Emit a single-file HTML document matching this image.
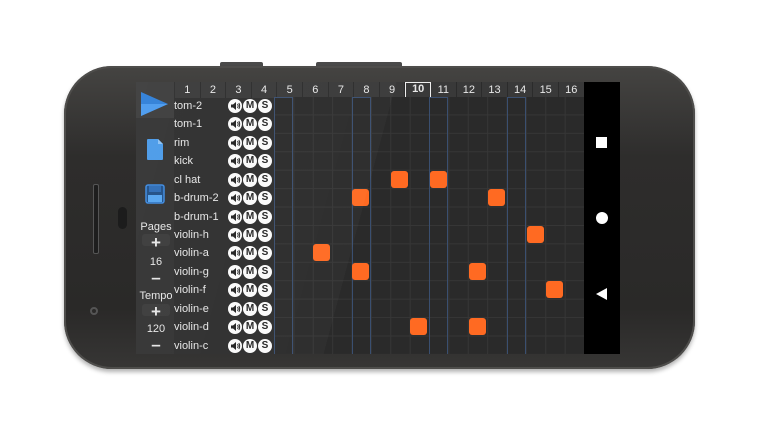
<!DOCTYPE html>
<html><head><style>
body{margin:0;width:768px;height:434px;background:#fff;position:relative;overflow:hidden;font-family:"Liberation Sans",sans-serif}
.a{position:absolute}
.phone{left:64px;top:66px;width:631px;height:303px;border-radius:48px;background:linear-gradient(180deg,#454442,#2e2d2c 30%,#2a2928 80%,#373635);box-shadow:0 0 0 2px #4e4d4b inset,0 3px 4px rgba(0,0,0,.3)}
.btn{background:#4a4a4a;height:4px;top:62px;border-radius:2px 2px 0 0}
.screen{left:136px;top:82px;width:448px;height:272px;background:#2d2d2d;overflow:hidden}
.nav{left:584px;top:82px;width:36px;height:272px;background:#000}
.hdr{top:0;height:16px;width:25.6px;background:#393939;border-right:1px solid #2b2b2b;box-sizing:border-box;color:#e8e8e8;font-size:11px;text-align:center;line-height:16px}
.grid{left:138px;top:15px;width:310px;height:258px;background-color:#2a2a2a;background-image:linear-gradient(90deg,#363636 1px,transparent 1px),linear-gradient(0deg,#363636 1px,transparent 1px);background-size:19.375px 18.43px}
.lbl{left:38px;color:#e6e6e6;font-size:11px;height:18.43px;line-height:18.43px}
.c{width:14px;height:14px;border-radius:50%;background:#fafafa;color:#222;font-size:10px;font-weight:bold;text-align:center;line-height:14px}
.blue{top:15px;width:19px;height:258px;border:1px solid #3a4f70;box-sizing:border-box}
.o{width:17px;height:17px;border-radius:3px;background:#ff6a22}
.lp{left:0;top:0;width:38px;height:272px;background:#323232}
.side{color:#e6e6e6;font-size:11px;text-align:center;width:40px;left:0}
</style></head><body>
<div class="a btn" style="left:220px;width:43px"></div>
<div class="a btn" style="left:316px;width:86px"></div>
<div class="a phone"></div>
<div class="a" style="left:93px;top:184px;width:4px;height:68px;border-radius:2px;background:#1e1e1e;border:1px solid #555"></div>
<div class="a" style="left:118px;top:207px;width:9px;height:22px;border-radius:5px;background:#1c1c1c"></div>
<div class="a" style="left:90px;top:307px;width:8px;height:8px;border-radius:50%;border:2px solid #555;box-sizing:border-box"></div>
<div class="a screen">
 <div class="a lp"></div>
 <div class="a" style="left:0;top:0;width:38px;height:36px;background:#3c3c3c"></div>
 <svg class="a" style="left:4px;top:9px" width="30" height="26"><polygon points="1,1 28,13 1,25" fill="#2f7fd8"/><polygon points="1,13 28,13 1,25" fill="#4a9aee"/></svg>
 <svg class="a" style="left:10px;top:56px" width="18" height="23"><path d="M1 2 Q1 1 2 1 H12 L17 6 V21 Q17 22 16 22 H2 Q1 22 1 21Z" fill="#4a9ae8"/><path d="M12 1 V6 H17" fill="#8cc2f5"/></svg>
 <svg class="a" style="left:9px;top:102px" width="20" height="20"><rect x="1" y="1" width="18" height="18" rx="2" fill="#1f4f86" stroke="#3d8ae0" stroke-width="1.5"/><rect x="4" y="2" width="12" height="6" fill="#2d6cb5"/><rect x="3" y="11" width="14" height="7" fill="#55a5f0"/></svg>
 <div class="a side" style="top:139px">Pages</div>
 <div class="a" style="left:6px;top:152px;width:28px;height:12px;background:#3a3a3a;border-radius:3px"></div>
 <div class="a side" style="top:151px;font-size:17px;font-weight:bold">+</div>
 <div class="a side" style="top:174px">16</div>
 <div class="a side" style="top:186px;font-size:17px;font-weight:bold">–</div>
 <div class="a side" style="top:208px">Tempo</div>
 <div class="a" style="left:6px;top:222px;width:28px;height:12px;background:#3a3a3a;border-radius:3px"></div>
 <div class="a side" style="top:220px;font-size:17px;font-weight:bold">+</div>
 <div class="a side" style="top:241px">120</div>
 <div class="a side" style="top:253px;font-size:17px;font-weight:bold">–</div>
 <div class="a hdr" style="left:39px">1</div><div class="a hdr" style="left:64.6px">2</div><div class="a hdr" style="left:90.2px">3</div><div class="a hdr" style="left:115.8px">4</div><div class="a hdr" style="left:141.4px">5</div><div class="a hdr" style="left:167px">6</div><div class="a hdr" style="left:192.6px">7</div><div class="a hdr" style="left:218.2px">8</div><div class="a hdr" style="left:243.8px">9</div><div class="a hdr" style="left:269.4px;border:1.5px solid #eee;font-weight:bold;line-height:13px">10</div><div class="a hdr" style="left:295px">11</div><div class="a hdr" style="left:320.6px">12</div><div class="a hdr" style="left:346.2px">13</div><div class="a hdr" style="left:371.8px">14</div><div class="a hdr" style="left:397.4px">15</div><div class="a hdr" style="left:423px">16</div>
 <div class="a grid"></div>
 <div class="a blue" style="left:138px"></div><div class="a blue" style="left:215.5px"></div><div class="a blue" style="left:293px"></div><div class="a blue" style="left:370.5px"></div>
 <div id="rows"></div>
 <div class="a o" style="left:255px;top:89px"></div><div class="a o" style="left:294px;top:89px"></div>
 <div class="a o" style="left:216px;top:107px"></div><div class="a o" style="left:352px;top:107px"></div>
 <div class="a o" style="left:391px;top:144px"></div>
 <div class="a o" style="left:177px;top:162px"></div>
 <div class="a o" style="left:216px;top:181px"></div><div class="a o" style="left:333px;top:181px"></div>
 <div class="a o" style="left:410px;top:199px"></div>
 <div class="a o" style="left:274px;top:236px"></div><div class="a o" style="left:333px;top:236px"></div>
 <div class="a" style="left:0;top:0;width:448px;height:272px;background:linear-gradient(105deg,rgba(255,255,255,.04) 0,rgba(255,255,255,.025) 50%,transparent 50%)"></div>
</div>
<div class="a nav">
 <div class="a" style="left:12px;top:55px;width:11px;height:11px;background:#fff"></div>
 <div class="a" style="left:12px;top:130px;width:12px;height:12px;border-radius:50%;background:#fff"></div>
 <svg class="a" style="left:12px;top:206px" width="12" height="12"><polygon points="11,0 11,12 0,6" fill="#fff"/></svg>
</div>
<script>
var n=["tom-2","tom-1","rim","kick","cl hat","b-drum-2","b-drum-1","violin-h","violin-a","violin-g","violin-f","violin-e","violin-d","violin-c"],h="";
var sp='<svg width="14" height="14" style="display:block"><path d="M3 5.5 H5 L8 3 V11 L5 8.5 H3Z" fill="#222"/><path d="M9.5 5 Q10.8 7 9.5 9 M10.8 4 Q12.6 7 10.8 10" stroke="#222" stroke-width="1" fill="none"/></svg>';
n.forEach(function(t,i){var y=15+i*18.43;h+='<div class="a lbl" style="top:'+y+'px">'+t+'</div>';
h+='<div class="a c" style="left:92px;top:'+(y+2)+'px">'+sp+'</div><div class="a c" style="left:107px;top:'+(y+2)+'px">M</div><div class="a c" style="left:122px;top:'+(y+2)+'px">S</div>';});
document.getElementById("rows").innerHTML=h;
</script>
</body></html>
